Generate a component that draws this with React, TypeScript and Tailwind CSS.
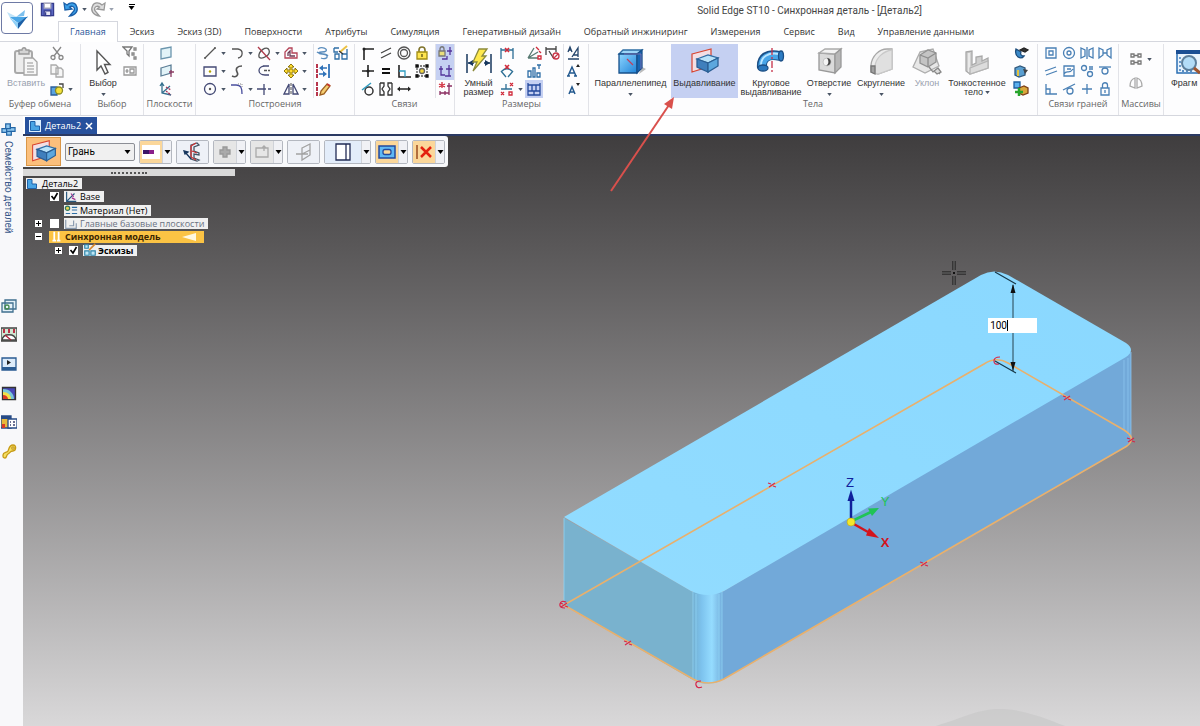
import React from 'react';
import clsx from 'clsx';

const TABS = [
  'Главная',
  'Эскиз',
  'Эскиз (3D)',
  'Поверхности',
  'Атрибуты',
  'Симуляция',
  'Генеративный дизайн',
  'Обратный инжиниринг',
  'Измерения',
  'Сервис',
  'Вид',
  'Управление данными',
];

const Icon = ({ children, className = 'h-4 w-4', box = 16 }: { children: React.ReactNode; className?: string; box?: number }) => (
  <svg viewBox={`0 0 ${box} ${box}`} className={clsx('shrink-0', className)} fill="none" stroke="#3d4270" strokeWidth="1.3" aria-hidden="true">
    {children}
  </svg>
);

const Caret = ({ className = 'h-[3px] w-[5px] text-gray-600' }: { className?: string }) => (
  <svg viewBox="0 0 6 4" className={clsx('shrink-0', className)} fill="currentColor" aria-hidden="true">
    <path d="M0 0h6L3 4z" />
  </svg>
);

/* ---------- Ribbon building blocks ---------- */

interface ToolProps {
  label: string;
  children: React.ReactNode;
  caret?: boolean;
  active?: boolean;
}

const Tool = ({ label, children, caret, active }: ToolProps) => (
  <button type="button" title={label} aria-label={label} className="flex h-[18px] items-center">
    <span className={clsx('flex h-[18px] w-[18px] items-center justify-center', active && 'bg-[#c5d0f2]')}>
      <Icon>{children}</Icon>
    </span>
    {caret && <Caret className="ml-0.5 h-[3px] w-[5px] text-gray-600" />}
  </button>
);

interface BigToolProps {
  icon: React.ReactNode;
  lines: string[];
  className: string;
  caret?: 'below' | 'inline';
  active?: boolean;
  muted?: boolean;
}

const BigTool = ({ icon, lines, className, caret, active, muted }: BigToolProps) => (
  <button
    type="button"
    className={clsx(
      "flex h-[54px] shrink-0 flex-col font-['Liberation_Sans',sans-serif] text-[9px] leading-[9px] whitespace-nowrap",
      className,
      active && 'bg-[#c5d0f2]',
      muted ? 'text-gray-400' : 'text-[#333]'
    )}
  >
    <span className="flex h-[35px] shrink-0 items-center justify-center">{icon}</span>
    {lines.map((line, index) => (
      <span key={line} className="flex items-center gap-0.5">
        {line}
        {caret === 'inline' && index === lines.length - 1 && <Caret />}
      </span>
    ))}
    {caret === 'below' && <Caret className="mt-[5px] h-[3px] w-[5px] text-gray-600" />}
  </button>
);

interface GroupProps {
  label: string;
  className: string;
  inset?: string;
  children: React.ReactNode;
}

const Group = ({ label, className, inset, children }: GroupProps) => (
  <section aria-label={label} className={clsx('shrink-0 border-r border-[#e2e3e8]', className)}>
    <div className={clsx('flex h-[54px]', inset)}>{children}</div>
    <div className="text-center font-['Open_Sans',sans-serif] text-[9px] leading-[11px] whitespace-nowrap text-[#666]">{label}</div>
  </section>
);

const Columns = ({ children, className }: { children: React.ReactNode; className?: string }) => (
  <div className={clsx('grid content-start', className)}>{children}</div>
);

/* ---------- Large ribbon icons ---------- */

const PasteIcon = () => (
  <Icon box={32} className="h-8 w-8">
    <rect x="5" y="5" width="17" height="22" rx="2" stroke="#a9a9a9" fill="#ececec" strokeWidth="2" />
    <path d="M9 8V4h3c0-3 4-3 4 0h3v4z" fill="#d4d4d4" stroke="#999" />
    <path d="M14 12h9l4 4v13H14z" fill="#f7f7f7" stroke="#a5a5a5" />
    <path d="M17 17h6M17 20h7M17 23h7M17 26h7" stroke="#b5b5b5" />
  </Icon>
);

const CursorIcon = () => (
  <Icon box={32} className="h-8 w-8">
    <path d="M10 5v19l4-4 4 8 3-1.500-3.500-8H23z" fill="#fff" stroke="#555" strokeWidth="1.400" />
  </Icon>
);

const SmartDimIcon = () => (
  <Icon box={32} className="h-8 w-8">
    <path d="M4 8v19M28 8v19" stroke="#17375e" strokeWidth="1.500" />
    <path d="M5 17h6M21 17h6" stroke="#17375e" strokeWidth="1.500" />
    <path d="M5 17l5-3v6zM27 17l-5-3v6z" fill="#17375e" stroke="none" />
    <path d="M16 3h8l-5 7h4L10 25l4-9h-4z" fill="#ffe94c" stroke="#8c8a3c" />
  </Icon>
);

const BoxIcon = () => (
  <Icon box={32} className="h-8 w-8">
    <path d="M24 28l7-5-4-2z" fill="#bbb" stroke="none" />
    <path d="M4 8l4-4h19l-5 4z" fill="#9bd6f8" stroke="#2e6ea4" />
    <path d="M4 8h18v19H4z" fill="url(#boxFace)" stroke="#17508b" />
    <path d="M22 8l5-4v18l-5 5z" fill="#1766b3" stroke="#17508b" />
    <path d="M9 8h17v15" stroke="#8b6fb0" strokeWidth=".8" />
    <path d="M12 13l6 6" stroke="#c0405d" />
    <defs>
      <linearGradient id="boxFace" x1="0" y1="0" x2="1" y2="1">
        <stop offset="0" stopColor="#8ed6ff" />
        <stop offset="1" stopColor="#1f83d8" />
      </linearGradient>
    </defs>
  </Icon>
);

const ExtrudeIcon = ({ className = 'h-8 w-8' }: { className?: string }) => (
  <Icon box={32} className={className}>
    <path d="M3 8l19-5v17L3 26z" fill="#f3dfe4" stroke="#d8442f" strokeWidth="1.200" />
    <path d="M8 13l11-4 10 3-10 5z" fill="#b9e3fa" stroke="#2f6ea6" />
    <path d="M8 13l11 4v9L8 21z" fill="#3f7fbd" stroke="#2b5f94" />
    <path d="M19 17l10-5v8l-10 6z" fill="#5ca7de" stroke="#2b5f94" />
  </Icon>
);

const RevolveIcon = () => (
  <Icon box={32} className="h-8 w-8">
    <path d="M7 22C6 12 12 7 25 10" stroke="#1a4f86" strokeWidth="10" />
    <path d="M7 21C7 12 13 8 25 10" stroke="#48a5e8" strokeWidth="7.500" />
    <path d="M6 19C6 11 13 6 24 8" stroke="#b9e5ff" strokeWidth="2" />
    <ellipse cx="8" cy="22" rx="5" ry="3" fill="#2a78be" stroke="#1a4f86" />
    <ellipse cx="26" cy="10" rx="2.500" ry="5" fill="#2c7cc4" stroke="#1a4f86" />
    <path d="M17 2v25" stroke="#c63148" strokeWidth="1.300" strokeDasharray="7 2 2 2" />
  </Icon>
);

const HoleIcon = () => (
  <Icon box={32} className="h-8 w-8">
    <path d="M6 7l16 1v19L6 24z" fill="#dadada" stroke="#999" />
    <path d="M6 7l6-4h16l-6 5z" fill="#f3f3f3" stroke="#aaa" />
    <path d="M22 8l6-5v18l-6 6z" fill="#b7b7b7" stroke="#999" />
    <circle cx="14" cy="16" r="4" fill="#f4f4f4" stroke="#bbb" strokeWidth=".8" />
    <path d="M14 12c4 0 5 5 2 7l-3 1c3-2 3-5 1-8z" fill="#444" stroke="none" />
  </Icon>
);

const RoundIcon = () => (
  <Icon box={32} className="h-8 w-8">
    <path d="M6 26v-7C7 10 14 3 22 3h5v20l-14 5z" fill="#ececec" stroke="#a7a7a7" />
    <path d="M10 27v-7C11 12 18 5 27 4v19l-14 5z" fill="#e0e0e0" stroke="#c9c9c9" />
    <path d="M6 20h4v8l-4-2z" fill="#a0a0a0" stroke="#777" />
  </Icon>
);

const DraftIcon = () => (
  <Icon box={32} className="h-8 w-8">
    <path d="M9 6l13-3 6 17-14 7L2 21z" fill="#e7e7e7" stroke="#adadad" />
    <path d="M9 9l8-5 8 3v9l-8 5-8-4z" fill="#c4c4c4" stroke="#929292" />
    <path d="M9 9l8 3 8-5M17 12v9" stroke="#8d8d8d" />
    <path d="M18 21l4 5 3-2 4 4" stroke="#888" />
    <path d="M23 25l4-3 3 4-4 2z" fill="#ddd" stroke="#888" />
  </Icon>
);

const ThinWallIcon = () => (
  <Icon box={32} className="h-8 w-8">
    <path d="M5 6l6-1v14l4-2v-6l6-1v5l6-3v10L9 28l-4-3z" fill="#cfcfcf" stroke="#a9a9a9" />
    <path d="M8 7v18l19-8" stroke="#f2f2f2" strokeWidth="1.500" />
    <path d="M9 22l18-7v7L9 28z" fill="#dcdcdc" stroke="#b5b5b5" />
  </Icon>
);

const FragmentIcon = () => (
  <Icon box={32} className="h-8 w-8">
    <path d="M6 5h25v22H6z" fill="#e8f3fd" stroke="#2b6fb3" strokeWidth="1.500" />
    <path d="M5 4h27v4H5z" fill="#1b4f94" stroke="none" />
    <path d="M9 11v14h14" stroke="#2b6fb3" strokeDasharray="2 2" />
    <circle cx="18" cy="17" r="7" fill="#b3dcf7" stroke="#5d7f9c" strokeWidth="2" />
    <path d="M23 22l6 5" stroke="#a0552f" strokeWidth="3" />
  </Icon>
);

/* ---------- Header ---------- */

const QuickAccess = () => (
  <div className="flex h-[21px] items-center">
    <div className="flex h-[18px] items-center self-start">
      <button type="button" aria-label="Сохранить" className="ml-[7px] flex">
        <Icon className="h-[15px] w-[15px]">
          <path d="M1.500 1.500h13v13h-13z" fill="#5a66c0" stroke="#353c8c" />
          <path d="M4.500 1.500h7v5h-7z" fill="#fff" stroke="#aab" />
          <path d="M4.500 9.500h7v5h-7z" fill="#e8e8f5" stroke="#353c8c" />
          <path d="M6 11v3" stroke="#353c8c" />
        </Icon>
      </button>
      <button type="button" aria-label="Отменить" className="ml-2 flex items-center gap-[3px]">
        <Icon className="h-4 w-4">
          <path d="M1 2l1 7 7-1-2.500-2c4-2.500 7 2 3 5.500l-3 3.500c7-1 9-6 7-10C12 1 7 1 4 4z" fill="#3ba0e8" stroke="#1b5fa8" />
        </Icon>
        <Caret />
      </button>
      <button type="button" aria-label="Повторить" className="ml-[3px] flex items-center gap-[3px]">
        <Icon className="h-4 w-4">
          <path d="M15 2l-1 7-7-1 2.500-2c-4-2.500-7 2-3 5.500l3 3.500c-7-1-9-6-7-10C4 1 9 1 12 4z" fill="#ddd" stroke="#999" />
        </Icon>
        <Caret className="h-[3px] w-[5px] text-gray-400" />
      </button>
      <button type="button" aria-label="Настройка панели" className="mb-1 ml-[14px] flex flex-col items-center gap-px">
        <span className="h-px w-1.5 bg-black" />
        <Caret className="h-1 w-[7px] text-black" />
      </button>
    </div>
    <h1 className="ml-auto pr-[278px] text-[10px] text-[#444]">Solid Edge ST10 - Синхронная деталь - [Деталь2]</h1>
  </div>
);

const Header = () => (
  <header className="flex bg-white">
    <button type="button" aria-label="Меню приложения" className="mt-0.5 ml-px flex h-8 w-8 shrink-0 items-center justify-center rounded border border-[#6e7aa5] bg-white">
      <Icon box={32} className="h-8 w-8">
        <path d="M6 10l10 5-6 3z" fill="#bfe3f8" stroke="none" />
        <path d="M15 15l9-7-1 6z" fill="#7cc0ee" stroke="none" />
        <path d="M9 15h18l-10 6z" fill="#4aa6e6" stroke="none" />
        <path d="M9 16l8 5v6z" fill="#8fd0f7" stroke="none" />
        <path d="M27 14l-10 7v6z" fill="#1c5fa6" stroke="none" />
      </Icon>
    </button>
    <div className="min-w-0 flex-1">
      <QuickAccess />
      <nav className="-mb-px flex h-[21px] gap-px pl-[25px] font-['Open_Sans',sans-serif] text-[9px] text-[#333]">
        {TABS.map((tab, index) => (
          <a
            key={tab}
            href="#"
            className={clsx(
              'flex items-center px-[11px] whitespace-nowrap',
              index === 0 && 'z-10 border border-b-0 border-[#d5d7de] bg-white text-[#2b579a]'
            )}
          >
            {tab}
          </a>
        ))}
      </nav>
    </div>
  </header>
);

/* ---------- Ribbon ---------- */

const Ribbon = () => (
  <div className="flex h-[75px] overflow-hidden border-y border-[#d5d7de] bg-[#fdfdfe] pt-0.5">
    <Group label="Буфер обмена" className="w-[81px]" inset="pl-1">
      <BigTool className="w-[44px] items-center" icon={<PasteIcon />} lines={['Вставить']} muted />
      <Columns className="w-8">
        <Tool label="Вырезать">
          <path d="M4 2l7 9M12 2L5 11" stroke="#888" />
          <circle cx="4" cy="12.500" r="2" stroke="#888" />
          <circle cx="12" cy="12.500" r="2" stroke="#888" />
        </Tool>
        <Tool label="Копировать">
          <path d="M2 2h5l2 2v7H2zM7 5h5l2 2v7H7z" fill="#f6f6f6" stroke="#aaa" />
        </Tool>
        <Tool label="Формат по образцу" caret>
          <path d="M2 6h6v8H2z" fill="#5aa3e0" stroke="#2a5f9a" />
          <circle cx="10" cy="9.500" r="3.500" fill="#f5e13c" stroke="#8b8b20" />
          <path d="M10 3h4v4" stroke="#444" />
        </Tool>
      </Columns>
    </Group>

    <Group label="Выбор" className="w-[63px]" inset="pl-1">
      <BigTool className="w-9 items-center" icon={<CursorIcon />} lines={['Выбор']} caret="below" />
      <Columns>
        <Tool label="Фильтр выбора">
          <path d="M1 2h9L7 6v5L5 9V6z" stroke="#777" />
          <path d="M12 3h2v2h-2zM10 8h2v2h-2zM12 12h2v2h-2z" stroke="#888" />
        </Tool>
        <Tool label="Окно выбора">
          <path d="M2 4h12v8H2zM8 6h4v4H8z" stroke="#999" />
          <path d="M5 6v4M3.500 8h3" stroke="#999" />
        </Tool>
      </Columns>
    </Group>

    <Group label="Плоскости" className="w-[52px]" inset="pl-[13px]">
      <Columns>
        <Tool label="Совпадающая плоскость">
          <path d="M3 4l10-2v10L3 14z" fill="#e2f3f8" stroke="#6b95ad" />
        </Tool>
        <Tool label="Плоскость по нормали">
          <path d="M3 5l10-3v8L3 13z" fill="#e2f3f8" stroke="#5b7d95" />
          <path d="M13 7v7M11 9h5" stroke="#8d3c63" />
        </Tool>
        <Tool label="Система координат">
          <path d="M4 2v10l9 2M4 12l8-7M2 5l2-3 2 3" stroke="#35708f" />
          <path d="M8 6l5 3M8 10l5 4" stroke="#a8365a" strokeDasharray="2 1" />
        </Tool>
      </Columns>
    </Group>

    <Group label="Построения" className="w-[159px]" inset="pl-[5px]">
      <Columns className="w-[108px] grid-cols-4">
        <Tool label="Отрезок" caret>
          <path d="M3 13L13 3" stroke="#555" />
          <circle cx="3" cy="13" r="1" fill="#555" stroke="none" />
          <circle cx="13" cy="3" r="1" fill="#555" stroke="none" />
        </Tool>
        <Tool label="Дуга" caret>
          <path d="M3 4h6c6 1 5 8 0 9" stroke="#555" />
        </Tool>
        <Tool label="Преобразование" caret>
          <path d="M3 12c-1-6 8-12 10-7S6 15 3 12z" stroke="#555" />
          <path d="M2 2l12 13" stroke="#b03a4a" />
        </Tool>
        <Tool label="Смещение" caret>
          <path d="M2 13V7l4-4h3v5h5v5z" stroke="#b44257" />
          <path d="M5 11V8l2-2v5h5" stroke="#6c3b55" />
        </Tool>
        <Tool label="Прямоугольник" caret>
          <path d="M2 4h12v9H2z" stroke="#444a75" />
          <circle cx="8" cy="8.500" r="1.200" fill="#b5a200" stroke="none" />
        </Tool>
        <Tool label="Кривая">
          <path d="M3 13c4 2 7-1 5-4-2-4 1-6 5-6" stroke="#555" strokeWidth="1.600" />
        </Tool>
        <Tool label="Эквидистанта">
          <path d="M9 3C1 3 1 12 9 12M7 3h6M7 12h6" stroke="#444a75" />
          <path d="M8 7.500h6" stroke="#555" strokeDasharray="3 1" />
        </Tool>
        <Tool label="Переместить" caret>
          <path d="M8 1l3 3H9v3h3V5l3 3-3 3V9H9v3h2l-3 3-3-3h2V9H4v2L1 8l3-3v2h3V4H5z" fill="#ffdc31" stroke="#856c00" strokeWidth=".9" />
        </Tool>
        <Tool label="Окружность" caret>
          <circle cx="8" cy="8" r="5.500" stroke="#444a75" />
          <circle cx="8" cy="8" r="1.200" fill="#555" stroke="none" />
        </Tool>
        <Tool label="Скругление линий" caret>
          <path d="M2 4h5c5 0 6 3 6 9" stroke="#4a4f9e" />
          <path d="M9 3h4v3" stroke="#aaa" strokeDasharray="1 1" />
        </Tool>
        <Tool label="Обрезать">
          <path d="M1 8h9M8 3v11M12 8h3" stroke="#444a75" />
        </Tool>
        <Tool label="Зеркало" caret>
          <path d="M6 3v10H1zM10 3v10h5z" stroke="#444a75" />
          <path d="M8 2v12" stroke="#777" strokeDasharray="3 1" />
        </Tool>
      </Columns>
      <Columns className="ml-1 border-l border-[#e2e3e8]">
        <Tool label="Проецировать">
          <path d="M3 4c4-3 10 0 8 2s-7 0-7 2 7 0 8 3-4 3-6 2M2 7c3 3 9 1 11 4" stroke="#5b8dbd" />
        </Tool>
        <Tool label="Привязка">
          <path d="M2 1v14" stroke="#b0203a" strokeWidth="1.800" strokeDasharray="4 1" />
          <path d="M14 1v14" stroke="#2f72b8" strokeWidth="1.800" />
          <path d="M12 5H6M4 11h6" stroke="#2f72b8" />
          <path d="M4 5l4-3v6zM12 11l-4-3v6z" fill="#2f72b8" stroke="none" />
        </Tool>
        <Tool label="Правка эскиза">
          <path d="M2 1v14" stroke="#b0203a" strokeWidth="1.800" strokeDasharray="4 1" />
          <path d="M5 14l1-4 6-7 3 2-6 8z" fill="#f4cd72" stroke="#9d5f21" />
          <path d="M12 3l3 2" stroke="#c7362f" strokeWidth="2" />
        </Tool>
      </Columns>
      <Columns>
        <Tool label="Вид эскиза">
          <path d="M1 3h5M1 3v4h4M2 9h4v5H2zM9 9h5v5H9zM14 9V4" stroke="#2f6fa6" />
          <path d="M7 7l7-6" stroke="#ecc245" strokeWidth="2" />
          <path d="M6 6l4 3" stroke="#333" />
        </Tool>
      </Columns>
    </Group>

    <Group label="Связи" className="w-[100px]" inset="pl-1">
      <Columns className="grid-cols-4">
        <Tool label="Соединение">
          <path d="M4 15V4h10" stroke="#222" strokeWidth="1.600" />
          <circle cx="4" cy="4" r="1.500" fill="#222" stroke="none" />
        </Tool>
        <Tool label="Параллельность">
          <path d="M3 8l10-5M3 13l10-5" stroke="#444" />
        </Tool>
        <Tool label="Концентричность">
          <circle cx="8" cy="8" r="6" stroke="#555" />
          <circle cx="8" cy="8" r="3.500" stroke="#555" />
        </Tool>
        <Tool label="Блокировка">
          <path d="M5 8V5c0-4 6-4 6 0v3" stroke="#80742d" strokeWidth="1.600" />
          <path d="M3 7h10v7H3z" fill="#ffe550" stroke="#a18d14" />
          <path d="M8 9v3" stroke="#55501e" />
        </Tool>
        <Tool label="Горизонтально-вертикально">
          <path d="M8 2v12M2 8h12" stroke="#222" strokeWidth="1.600" />
          <circle cx="8" cy="8" r="1.500" fill="#222" stroke="none" />
        </Tool>
        <Tool label="Равенство">
          <path d="M4 6h8M4 10h8" stroke="#111" strokeWidth="2" />
        </Tool>
        <Tool label="Перпендикулярность">
          <path d="M3 2v12h12" stroke="#222" strokeWidth="1.600" />
          <path d="M3 8h6v6" stroke="#2e9cc0" />
        </Tool>
        <Tool label="Жесткий набор">
          <path d="M3 3h10v10H3z" stroke="#555" strokeDasharray="2 1" />
          <path d="M2 2h2v2H2zM12 2h2v2h-2zM2 12h2v2H2zM12 12h2v2h-2z" fill="#111" stroke="#111" />
          <circle cx="8" cy="8" r="2.500" fill="#f5d83c" stroke="#666" />
        </Tool>
        <Tool label="Касание">
          <circle cx="9" cy="10" r="4" stroke="#333" strokeWidth="1.500" />
          <path d="M2 9l9-7" stroke="#2e9cc0" strokeWidth="1.500" />
        </Tool>
        <Tool label="Симметрия">
          <path d="M2 2h4v3L4 8l2 3v3H2V2M14 2h-4v3l2 3-2 3v3h4V2" stroke="#333" />
        </Tool>
        <Tool label="Коллинеарность">
          <path d="M2 8h12" stroke="#222" strokeWidth="1.500" />
          <path d="M1 8l3-2.500v5zM15 8l-3-2.500v5z" fill="#222" stroke="none" />
        </Tool>
      </Columns>
      <Columns className="ml-1 border-l border-[#e2e3e8]">
        <Tool label="Сохранять связи" active>
          <path d="M3 6V4c0-3 4-3 4 0v2" stroke="#777" />
          <path d="M2 6h6v5H2z" fill="#e9de7b" stroke="#777" />
          <path d="M13 2v8M10 6h5M5 14h5v-3" stroke="#54349a" />
        </Tool>
        <Tool label="Обозначения связей" active>
          <path d="M4 3v9h4M2 6h4M12 2v11M9 6h6M8 13h6" stroke="#54349a" />
        </Tool>
        <Tool label="Помощник связей">
          <path d="M5 1v6M2 3l6 3M8 3L2 6" stroke="#d02a3a" />
          <path d="M3 10v4M3 12h9M8 10v4M12 2v12M10 5h5" stroke="#8b2e62" />
        </Tool>
      </Columns>
    </Group>

    <Group label="Размеры" className="w-[134px]" inset="pl-1">
      <BigTool className="w-[39px] items-center" icon={<SmartDimIcon />} lines={['Умный', 'размер']} />
      <Columns className="w-[27px]">
        <Tool label="Расстояние">
          <path d="M2 3v11M14 3v11M2 5h12" stroke="#2d6f95" />
          <path d="M6 3l4 4M10 3L6 7" stroke="#d02a3a" strokeWidth="1.600" />
        </Tool>
        <Tool label="Угол">
          <path d="M2 8l5 6M14 8l-5 6M3 8c3-3 7-3 10 0" stroke="#2d6f95" />
          <path d="M6 2l4 4M10 2L6 6" stroke="#d02a3a" strokeWidth="1.600" />
        </Tool>
        <Tool label="Координатный размер" caret>
          <path d="M7 3v5H2M7 8h6" stroke="#2d6f95" />
          <path d="M11 2l3 3M14 2l-3 3M2 11l3 3M5 11l-3 3M10 11h3v3h-3z" stroke="#d02a3a" />
        </Tool>
      </Columns>
      <Columns className="w-9 grid-cols-2">
        <Tool label="Угловой координатный">
          <path d="M2 13L8 3M2 13l10-6M2 13h10" stroke="#587a72" />
          <path d="M10 2l3 3M13 6l2 2M12 11h3v3h-3z" stroke="#d02a3a" />
        </Tool>
        <Tool label="Присоединить размер">
          <path d="M2 2v8M12 1v6M2 4h10M5 6l5 8" stroke="#444" />
          <circle cx="12" cy="11" r="3" stroke="#c93648" />
          <path d="M10 13l4-4" stroke="#c93648" />
        </Tool>
        <Tool label="Выровнять">
          <path d="M2 8h3v6H2zM7 5h2v9H7zM11 2h4M13 2v4M11 10h3v4h-3z" stroke="#2f6fa6" />
        </Tool>
        <span />
        <Tool label="Стиль размера" active>
          <path d="M2 2v12h12V2M2 4h12M6 4v6M10 4v6M2 10h12M8 10v4" stroke="#24499d" />
        </Tool>
      </Columns>
      <Columns className="ml-0.5 border-l border-[#e2e3e8]">
        <Tool label="Стили текста">
          <path d="M3 7l2-5 2 5M4 5h2M7 12l6-9v9M8 10h5M3 14h11" stroke="#23446b" />
        </Tool>
        <Tool label="Увеличить шрифт">
          <path d="M3 13L7 4l4 9M4 10h6M2 13h3M9 13h3" stroke="#23598f" strokeWidth="1.500" />
          <path d="M11 4l2-3 2 3z" fill="#222" stroke="none" />
        </Tool>
        <Tool label="Уменьшить шрифт">
          <path d="M4 13l3-7 3 7M5 11h4" stroke="#23598f" strokeWidth="1.500" />
          <path d="M11 2h4l-2 3z" fill="#222" stroke="none" />
        </Tool>
      </Columns>
    </Group>

    <Group label="Тела" className="w-[449px]" inset="pl-px">
      <BigTool className="w-[81px] items-center" icon={<BoxIcon />} lines={['Параллелепипед']} caret="below" />
      <BigTool className="w-[67px] items-center" icon={<ExtrudeIcon />} lines={['Выдавливание']} active />
      <BigTool className="w-[66px] items-center" icon={<RevolveIcon />} lines={['Круговое', 'выдавливание']} />
      <BigTool className="w-[50px] items-center" icon={<HoleIcon />} lines={['Отверстие']} caret="below" />
      <BigTool className="w-[54px] items-center" icon={<RoundIcon />} lines={['Скругление']} caret="below" />
      <BigTool className="w-[38px] items-center" icon={<DraftIcon />} lines={['Уклон']} muted />
      <BigTool className="w-[62px] items-center" icon={<ThinWallIcon />} lines={['Тонкостенное', 'тело']} caret="inline" />
      <Columns className="ml-1">
        <Tool label="Тело по сечениям">
          <path d="M3 4c-2 8 5 11 8 7-3 0-4-2-3-4z" fill="#3b8ac9" stroke="#1d4d7c" />
          <path d="M7 5l4-2 4 2-3 2z" fill="#333" stroke="#222" />
        </Tool>
        <Tool label="Добавить тело">
          <path d="M2 5l5-2 5 2v7l-6 2-4-2z" fill="#5a9fd1" stroke="#31597c" />
          <path d="M5 7v6" stroke="#e4c23d" strokeWidth="2" />
          <path d="M10 6l5 1-3 4z" fill="#444" stroke="none" />
        </Tool>
        <Tool label="Объединить тела">
          <path d="M1 1h6v6H1z" fill="#5cb0ee" stroke="#1d5fa0" />
          <path d="M6 7l5-2 4 2v5l-5 2-4-2z" fill="#d9a63b" stroke="#7d3f16" />
          <path d="M6 7v8M2 11h8" stroke="#27a52c" strokeWidth="2.500" />
        </Tool>
      </Columns>
    </Group>

    <Group label="Связи граней" className="w-[81px]" inset="pl-1">
      <Columns className="grid-cols-4 [&_svg]:stroke-[#4a80b5]">
        <Tool label="Компланарность"><path d="M3 3h10v10H3zM6 6h4v4H6z" /></Tool>
        <Tool label="Соосность">
          <circle cx="8" cy="8" r="5.500" />
          <circle cx="8" cy="8" r="2" />
        </Tool>
        <Tool label="Симметрия граней"><path d="M2 3l4 2v6l-4 2zM14 3l-4 2v6l4 2zM8 2v12" /></Tool>
        <Tool label="Смещение граней"><path d="M2 3l4 2v5l-4 3zM14 3l-4 2v5l4 3zM6 8h4" /></Tool>
        <Tool label="Параллельные грани"><path d="M2 8l11-4M3 12l11-4" /></Tool>
        <Tool label="Жесткая связь"><path d="M3 3h10v10H3zM3 11c3-5 5 1 9-5M6 6h4" /></Tool>
        <Tool label="Равный радиус">
          <circle cx="5" cy="5" r="2.500" />
          <circle cx="11" cy="11" r="2.500" />
          <path d="M10 4h4M10 6h4" />
        </Tool>
        <Tool label="Касание граней">
          <path d="M2 4h12" />
          <circle cx="8" cy="8" r="3" />
        </Tool>
        <Tool label="Перпендикулярные грани"><path d="M3 3v10h11M3 8h4v5" /></Tool>
        <Tool label="Касательные грани">
          <path d="M2 9l12-6" />
          <circle cx="9" cy="10" r="3" />
        </Tool>
        <Tool label="Базовая связь"><path d="M8 3v10M3 8h10" /></Tool>
        <Tool label="Фиксация"><path d="M4 7h8v7H4zM5.500 7V4c0-3 5-3 5 0v3M8 9v3" /></Tool>
      </Columns>
    </Group>

    <Group label="Массивы" className="w-[45px]" inset="pl-2">
      <div className="flex flex-col gap-1.5 pt-1.5">
        <Tool label="Прямоугольный массив" caret>
          <path d="M3 3h3v3H3zM10 3h3v3h-3zM3 10h3v3H3zM10 10h3v3h-3zM6 4.500h4M6 11.500h4" stroke="#777" />
        </Tool>
        <Tool label="Зеркальная копия">
          <path d="M7 3v10l-5-2c0-4 2-7 5-8zM9 3v10l5-2c0-4-2-7-5-8z" stroke="#aaa" />
        </Tool>
      </div>
    </Group>

    <BigTool className="items-start pl-[7px]" icon={<FragmentIcon />} lines={['Фрагм']} />
  </div>
);

/* ---------- Side panel ---------- */

const SideBar = () => (
  <aside className="flex w-[23px] shrink-0 flex-col bg-[#f8f8fa] px-px pt-1.5">
    <Icon className="h-[15px] w-[15px]">
      <path d="M5 2h5v4h5v4h-4v4H6v-3H1V7h4z" fill="#8fc7ef" stroke="#2365a5" />
      <path d="M5 7h5V2M6 11V7M11 10H6" stroke="#2365a5" />
    </Icon>
    <div className="mt-1 h-24 self-start pl-px text-[10px] leading-3 whitespace-nowrap text-[#3a5a8c] [writing-mode:vertical-rl]">Семейство деталей</div>
    <div className="mt-[61px] flex flex-col gap-[13px]">
      <Icon>
        <path d="M4 2h11v9H4zM1 5h11v9H1z" fill="#e4f1f8" stroke="#3f6f8f" />
        <circle cx="6" cy="9" r="2" stroke="#43894f" />
      </Icon>
      <Icon>
        <path d="M0 1h16v13H0z" fill="#cfe6d2" stroke="#444" />
        <path d="M3 2v4M8 2v4M13 2v4" stroke="#ba3047" strokeWidth="2" />
        <path d="M1 13c1-7 13-7 14 0z" fill="#fff" stroke="#444" />
        <path d="M4 8l6 5" stroke="#b0203a" />
      </Icon>
      <Icon>
        <path d="M1 2h14v12H1z" fill="#dcebfa" stroke="#2a5b92" />
        <path d="M1 11h14v3H1z" fill="#2a5b92" stroke="none" />
        <path d="M6 4v5l4-2.500z" fill="#222" stroke="none" />
      </Icon>
      <Icon>
        <path d="M1.500 2.500h13v12h-13z" fill="#4747b8" stroke="#333" />
        <path d="M2 4c7 0 11 5 11 10H2z" fill="#79c6d8" stroke="none" />
        <path d="M2 7c5 0 8 3 8 7H2z" fill="#f1e047" stroke="none" />
        <path d="M2 10c3 0 5 2 5 4H2z" fill="#db3a25" stroke="none" />
      </Icon>
      <Icon>
        <path d="M0 2h10v12H0z" fill="#e8b83a" stroke="#274b86" />
        <path d="M0 2h10v3H0z" fill="#274b86" stroke="none" />
        <path d="M1 10h3v4H1z" fill="#db3a25" stroke="none" />
        <path d="M7 5h9v9H7z" fill="#fff" stroke="#274b86" />
        <path d="M9 8h1M12 8h2M9 11h1M12 11h2" />
      </Icon>
      <Icon>
        <path d="M2 12c0-3 4-2 5-4S8 2 12 2s3 6 0 6-3 2-5 3-1 4-3 4-2-1-2-3z" fill="#f5df62" stroke="#c79b16" />
        <circle cx="12" cy="5" r="1.200" fill="#fff" stroke="#c79b16" />
      </Icon>
    </div>
  </aside>
);

/* ---------- Command bar over the viewport ---------- */

interface CommandProps {
  label: string;
  children: React.ReactNode;
  size?: string;
  tone?: 'plain' | 'hot' | 'off' | 'blue';
  caret?: boolean;
}

const Command = ({ label, children, size = 'w-[33px]', tone = 'plain', caret }: CommandProps) => (
  <button type="button" title={label} aria-label={label} className={clsx('flex h-6 shrink-0 overflow-hidden rounded-[2px] border border-[#b4b8c0] bg-white', size)}>
    <span
      className={clsx(
        'flex h-full min-w-0 flex-1 items-center justify-center',
        tone === 'plain' && 'bg-[#eef1f7]',
        tone === 'hot' && 'bg-[#fbd79a]',
        tone === 'off' && 'bg-[#e6e6e6]',
        tone === 'blue' && 'bg-[#e3edfa]'
      )}
    >
      {children}
    </span>
    {caret && (
      <span className="flex h-full w-[9px] items-center justify-center border-l border-[#cfd2d8] bg-[#f0f1f5]">
        <Caret className="h-1 w-[7px] text-black" />
      </span>
    )}
  </button>
);

const CommandBar = () => (
  <div className="flex h-[31px] w-[425px] items-center gap-1 rounded-r-[3px] bg-[#f8f9fb] pl-[3px]">
    <button type="button" aria-label="Выдавливание" className="flex h-[29px] w-[35px] items-center justify-center border border-[#d99647] bg-[#fbbf7c]">
      <ExtrudeIcon className="h-7 w-7" />
    </button>
    <div className="relative h-[18px] w-[70px]">
      <select
        aria-label="Тип выбора"
        className="block h-full w-full appearance-none rounded-[2px] border border-[#8c8f96] bg-[#f0f0f0] pl-0.5 text-[10px] leading-4 text-black"
      >
        <option>Грань</option>
      </select>
      <Caret className="pointer-events-none absolute top-[7px] right-1 h-1 w-[7px] text-black" />
    </div>
    <Command label="Стиль линии" tone="hot" caret>
      <svg viewBox="0 0 18 14" className="h-3.5 w-[18px]" aria-hidden="true">
        <path d="M0 0h18v14H0z" fill="#fff" />
        <path d="M1 5h6v4H1z" fill="#3b1668" />
        <path d="M7 5h5v4H7z" fill="#8a1e8a" />
      </svg>
    </Command>
    <Command label="Открытый контур">
      <Icon box={20} className="h-5 w-5">
        <path d="M8 3l6-2 2 2-5 2v4l5 2v2l-5-1v4l5 2-2 1-6-2z" fill="#e5eff8" stroke="#456" />
        <path d="M13 1L8 4v11l5 3M9 9l5 2" stroke="#c33" />
        <path d="M2 10l6 7M1 9l4 1-3 2z" fill="#17375e" stroke="#17375e" />
      </Icon>
    </Command>
    <Command label="Добавить" tone="off" caret>
      <Icon><path d="M6 3h4v3h3v4h-3v3H6v-3H3V6h3z" fill="#aaa" stroke="#999" /></Icon>
    </Command>
    <Command label="Область" tone="off" caret>
      <Icon><path d="M2 4h12v9H2zM10 7V2M8 4l2-2 2 2" stroke="#aaa" /></Icon>
    </Command>
    <Command label="Плоскость">
      <Icon box={20} className="h-5 w-5">
        <path d="M8 6l8-4v11l-8 5zM2 12h12M8 12l8-4" stroke="#a2a2a2" />
      </Icon>
    </Command>
    <Command label="Симметрично" tone="blue" size="w-[47px]" caret>
      <Icon box={20} className="h-5 w-5">
        <path d="M3 2h14v16H3z" fill="#fff" stroke="#222c55" />
        <path d="M13 2v16" stroke="#222c55" />
      </Icon>
    </Command>
    <Command label="Внутренние контуры" tone="hot" caret>
      <Icon box={20} className="h-5 w-5">
        <path d="M2 4h16v12H2z" fill="#5fb8f5" stroke="#24499d" strokeWidth="1.500" />
        <rect x="6" y="7.500" width="8" height="5" rx="2" fill="#fbd79a" stroke="#24499d" />
      </Icon>
    </Command>
    <Command label="Отменить операцию" tone="hot" caret>
      <Icon box={20} className="h-5 w-5">
        <path d="M3 3v14" stroke="#9a4b1e" strokeWidth="1.500" />
        <path d="M7 5l10 10M17 5L7 15" stroke="#e3210f" strokeWidth="2.500" />
      </Icon>
    </Command>
  </div>
);

/* ---------- Model tree ---------- */

const Expander = ({ open }: { open?: boolean }) => (
  <button type="button" aria-label={open ? 'Свернуть' : 'Развернуть'} className="flex h-[7px] w-[7px] shrink-0 items-center justify-center bg-white">
    <svg viewBox="0 0 7 7" className="h-[7px] w-[7px]" stroke="#000" aria-hidden="true">
      <path d={open ? 'M1 3.500h5' : 'M1 3.500h5M3.500 1v5'} />
    </svg>
  </button>
);

const Check = ({ label, checked }: { label: string; checked?: boolean }) => (
  <span className="relative h-[9px] w-[9px] shrink-0">
    <input type="checkbox" aria-label={label} defaultChecked={checked} className="peer block h-full w-full appearance-none bg-white" />
    <svg viewBox="0 0 9 9" className="pointer-events-none absolute inset-0 hidden h-full w-full peer-checked:block" fill="none" stroke="#000" strokeWidth="1.600" aria-hidden="true">
      <path d="M1.500 4L4 7l3.500-6" />
    </svg>
  </span>
);

const NODE = 'flex h-[11px] items-center bg-[#f0f0f0] leading-[11px] whitespace-nowrap';

const ModelTree = () => (
  <div className="mt-px grid h-20 grid-rows-6 items-center pl-[3px] font-['Open_Sans',sans-serif] text-[9px]">
    <div className="flex items-center">
      <span className={clsx(NODE, 'gap-1 pr-1 text-black')}>
        <Icon className="h-3 w-3">
          <path d="M2 2h6v6h6v6H2z" fill="#49a5e5" stroke="#1b5fa8" />
        </Icon>
        Деталь2
      </span>
    </div>
    <div className="flex items-center gap-[5px] pl-6">
      <Check label="Base" checked />
      <span className={clsx(NODE, 'gap-0.5 pr-1 text-black')}>
        <Icon className="h-3.5 w-3.5">
          <path d="M3 2v11h11M3 13l9-9" stroke="#24567e" />
          <path d="M8 4l3 4M9 9l4 2" stroke="#a12e8d" />
        </Icon>
        Base
      </span>
    </div>
    <div className="flex items-center pl-[38px]">
      <span className={clsx(NODE, 'gap-0.5 pr-1 text-black')}>
        <Icon className="h-3.5 w-3.5">
          <circle cx="4" cy="6" r="2.500" fill="#e6d352" stroke="#2d7561" />
          <path d="M2 12h5M9 5h6M9 8h6M9 12h6" stroke="#2f6fa6" />
        </Icon>
        Материал (Нет)
      </span>
    </div>
    <div className="flex items-center pl-[9px]">
      <Expander />
      <span className="w-2" />
      <Check label="Главные базовые плоскости" />
      <span className={clsx(NODE, 'ml-[5px] gap-0.5 pr-1 text-gray-500')}>
        <Icon className="h-3.5 w-3.5">
          <path d="M2 3v10h12V7M6 10h5V4" stroke="#8798ad" />
        </Icon>
        Главные базовые плоскости
      </span>
    </div>
    <div className="flex items-center pl-[9px]">
      <Expander open />
      <span className="ml-[7px] flex h-3 w-[155px] items-center gap-0.5 bg-[#fbc344] leading-3 font-bold whitespace-nowrap text-[#3a2500]">
        <Icon className="h-3.5 w-3.5">
          <path d="M6 2v10M11 2v10M4 12h4M9 12h4" stroke="#fff" strokeWidth="2" />
        </Icon>
        Синхронная модель
        <svg viewBox="0 0 14 8" className="mr-2 ml-auto h-2 w-3.5" fill="#fff8e0" aria-hidden="true">
          <path d="M14 0v8L0 4z" />
        </svg>
      </span>
    </div>
    <div className="flex items-center pl-[29px]">
      <Expander />
      <span className="w-[7px]" />
      <Check label="Эскизы" checked />
      <span className={clsx(NODE, 'ml-[5px] gap-px pr-1 font-bold text-black')}>
        <Icon className="h-3.5 w-3.5">
          <path d="M2 2h4v4H2zM2 9h5v5H2zM9 9h5v5H9z" fill="#bfe6f5" stroke="#2b83a8" />
          <path d="M7 8l7-7" stroke="#d6872a" strokeWidth="2" />
        </Icon>
        Эскизы
      </span>
    </div>
  </div>
);

/* ---------- 3D viewport ---------- */

const TICKS = [
  [564, 605],
  [628, 643],
  [772, 485],
  [1067, 398],
  [924, 564],
  [1131, 440],
];

const Model = () => (
  <svg viewBox="23 134 1177 592" className="absolute inset-0 h-full w-full" fill="none" role="img" aria-label="Модель детали">
    <defs>
      <linearGradient id="frontEdge">
        <stop offset="0" stopColor="#73afd0" />
        <stop offset=".3" stopColor="#7dc3ee" />
        <stop offset=".65" stopColor="#95dcff" />
        <stop offset="1" stopColor="#74aedc" />
      </linearGradient>
      <linearGradient id="topFace" x1="0" y1="1" x2="1" y2="0">
        <stop offset="0" stopColor="#92dcff" />
        <stop offset="1" stopColor="#8ad8ff" />
      </linearGradient>
    </defs>

    <path d="M922 730C960 720 975 709 1000 709S1050 720 1075 730z" fill="#c6c6c6" opacity=".6" />

    {/* solid body */}
    <path d="M564 518L693 592V680L564 605z" fill="#79b2ce" />
    <path d="M722 592L1131 352V440Q1131 444 1126 447L722 680z" fill="#72a9d9" />
    <path d="M693 590V680Q708 688 722 680V590z" fill="url(#frontEdge)" />
    <path d="M564 517L981 275Q994 268 1008 275L1126 343Q1136 350 1126 357L724 591Q708 599 691 591z" fill="url(#topFace)" />
    <path d="M564 518V605M693 592V680M696 594V681M719 594V681M722 592V679" stroke="#8fd3f5" strokeWidth=".8" />
    <path d="M1124 360V430M1128 358V434M1131 352V438" stroke="#8cc4ef" strokeWidth=".8" />

    {/* source profile */}
    <path
      d="M564 605L984 364Q996 356 1008 363L1124 430Q1137 438 1127 446L724 679Q708 687 693 679z"
      stroke="#e9b06c"
      strokeWidth="1.600"
    />
    {TICKS.map(([x, y]) => (
      <path key={`${x}-${y}`} d={`M${x - 4} ${y - 2}l3 1M${x + 1} ${y + 1}l3 1M${x - 3} ${y + 2}l6-4`} stroke="#d6274c" strokeWidth="1.200" />
    ))}
    <path d="M566 602q-5-2-6 2t5 4M1000 357q-6 0-6 4t5 3M701 681q-6 0-5 4t6 2" stroke="#d6274c" strokeWidth="1.200" />

    {/* extent dimension */}
    <path d="M1013 285V371" stroke="#26424f" />
    <path d="M1013 284l-2.500 9h5zM1013 371l-2.500-9h5z" fill="#111" />
    <path d="M995 272L1016 284M995 361L1016 373" stroke="#173848" strokeWidth="1.200" />

    {/* coordinate triad */}
    <g strokeWidth="2.500">
      <path d="M851 521V500" stroke="#10209b" />
      <path d="M847.500 501L851 489.500L854.500 501z" fill="#10209b" />
      <path d="M852 521L871 512" stroke="#1fc456" />
      <path d="M868 508.500L879 508L872 516z" fill="#1fc456" />
      <path d="M852 523L868 532" stroke="#d3141d" />
      <path d="M869 528L879 538L866 535.500z" fill="#d3141d" />
    </g>
    <circle cx="851" cy="522" r="4" fill="#f3e72a" stroke="#b8a41a" strokeWidth=".6" />
    <g fontFamily="Liberation Sans, sans-serif" fontSize="13" textAnchor="middle">
      <text x="850" y="487" fill="#10209b">Z</text>
      <text x="885" y="506" fill="#1fc456">Y</text>
      <text x="885" y="547" fill="#d3141d" fontWeight="bold">X</text>
    </g>

    {/* crosshair pointer */}
    <path d="M954 261v9M954 276v9M942 273h9M957 273h9" stroke="#111" strokeWidth="3" />
    <path d="M954 261v9M954 276v9M942 273h9M957 273h9" stroke="#8a8a8a" />
    <path d="M953 273h2" stroke="#111" strokeWidth="2" />
  </svg>
);

export default function App() {
  return (
    <div className="relative flex min-h-screen flex-col overflow-hidden bg-white font-['Roboto',sans-serif]">
      <Header />
      <Ribbon />
      <div className="flex flex-1">
        <SideBar />
        <main className="flex min-w-0 flex-1 flex-col">
          <div className="flex h-[18px] items-end bg-white pl-0.5">
            <div className="flex h-[17px] items-center gap-1 bg-[#27519d] px-1 font-['Open_Sans',sans-serif] text-[9px] text-white">
              <Icon className="h-3 w-3">
                <path d="M0 0h16v16H0z" fill="#dcefff" stroke="none" />
                <path d="M2 2h6v6h6v6H2z" fill="#49a5e5" stroke="#1b5fa8" />
              </Icon>
              Деталь2
              <button type="button" aria-label="Закрыть">
                <svg viewBox="0 0 8 8" className="h-2 w-2" stroke="#fff" strokeWidth="1.500" aria-hidden="true">
                  <path d="M1 1l6 6M7 1L1 7" />
                </svg>
              </button>
            </div>
          </div>
          <div className="relative flex-1 bg-linear-to-b from-[#3f3d3e] to-[#d9d8d9]">
            <Model />
            <div className="relative border-t-2 border-[#2b3a63]">
              <CommandBar />
              <div className="mt-0.5 flex h-[7px] w-[212px] items-center justify-center bg-[#d9d9d9]">
                <span className="w-9 border-t-2 border-dotted border-[#555]" />
              </div>
              <ModelTree />
            </div>
            <div className="absolute top-[31%] left-[82%] h-[15px] w-[49px] bg-white">
              <input type="text" aria-label="Расстояние" defaultValue="100" className="block h-full w-full px-0.5 text-[10px] text-black outline-none" />
              <span className="absolute inset-y-0.5 left-[19px] w-px bg-black" />
            </div>
          </div>
        </main>
      </div>

      {/* callout arrow to the active command */}
      <svg viewBox="0 0 70 100" className="pointer-events-none absolute top-[95px] left-[607px] z-20 h-[100px] w-[70px]" aria-hidden="true">
        <path d="M4 96L62 10" stroke="#d9504c" strokeWidth="2" />
        <path d="M67 2L65 14L57 9z" fill="#d9504c" />
      </svg>
    </div>
  );
}
